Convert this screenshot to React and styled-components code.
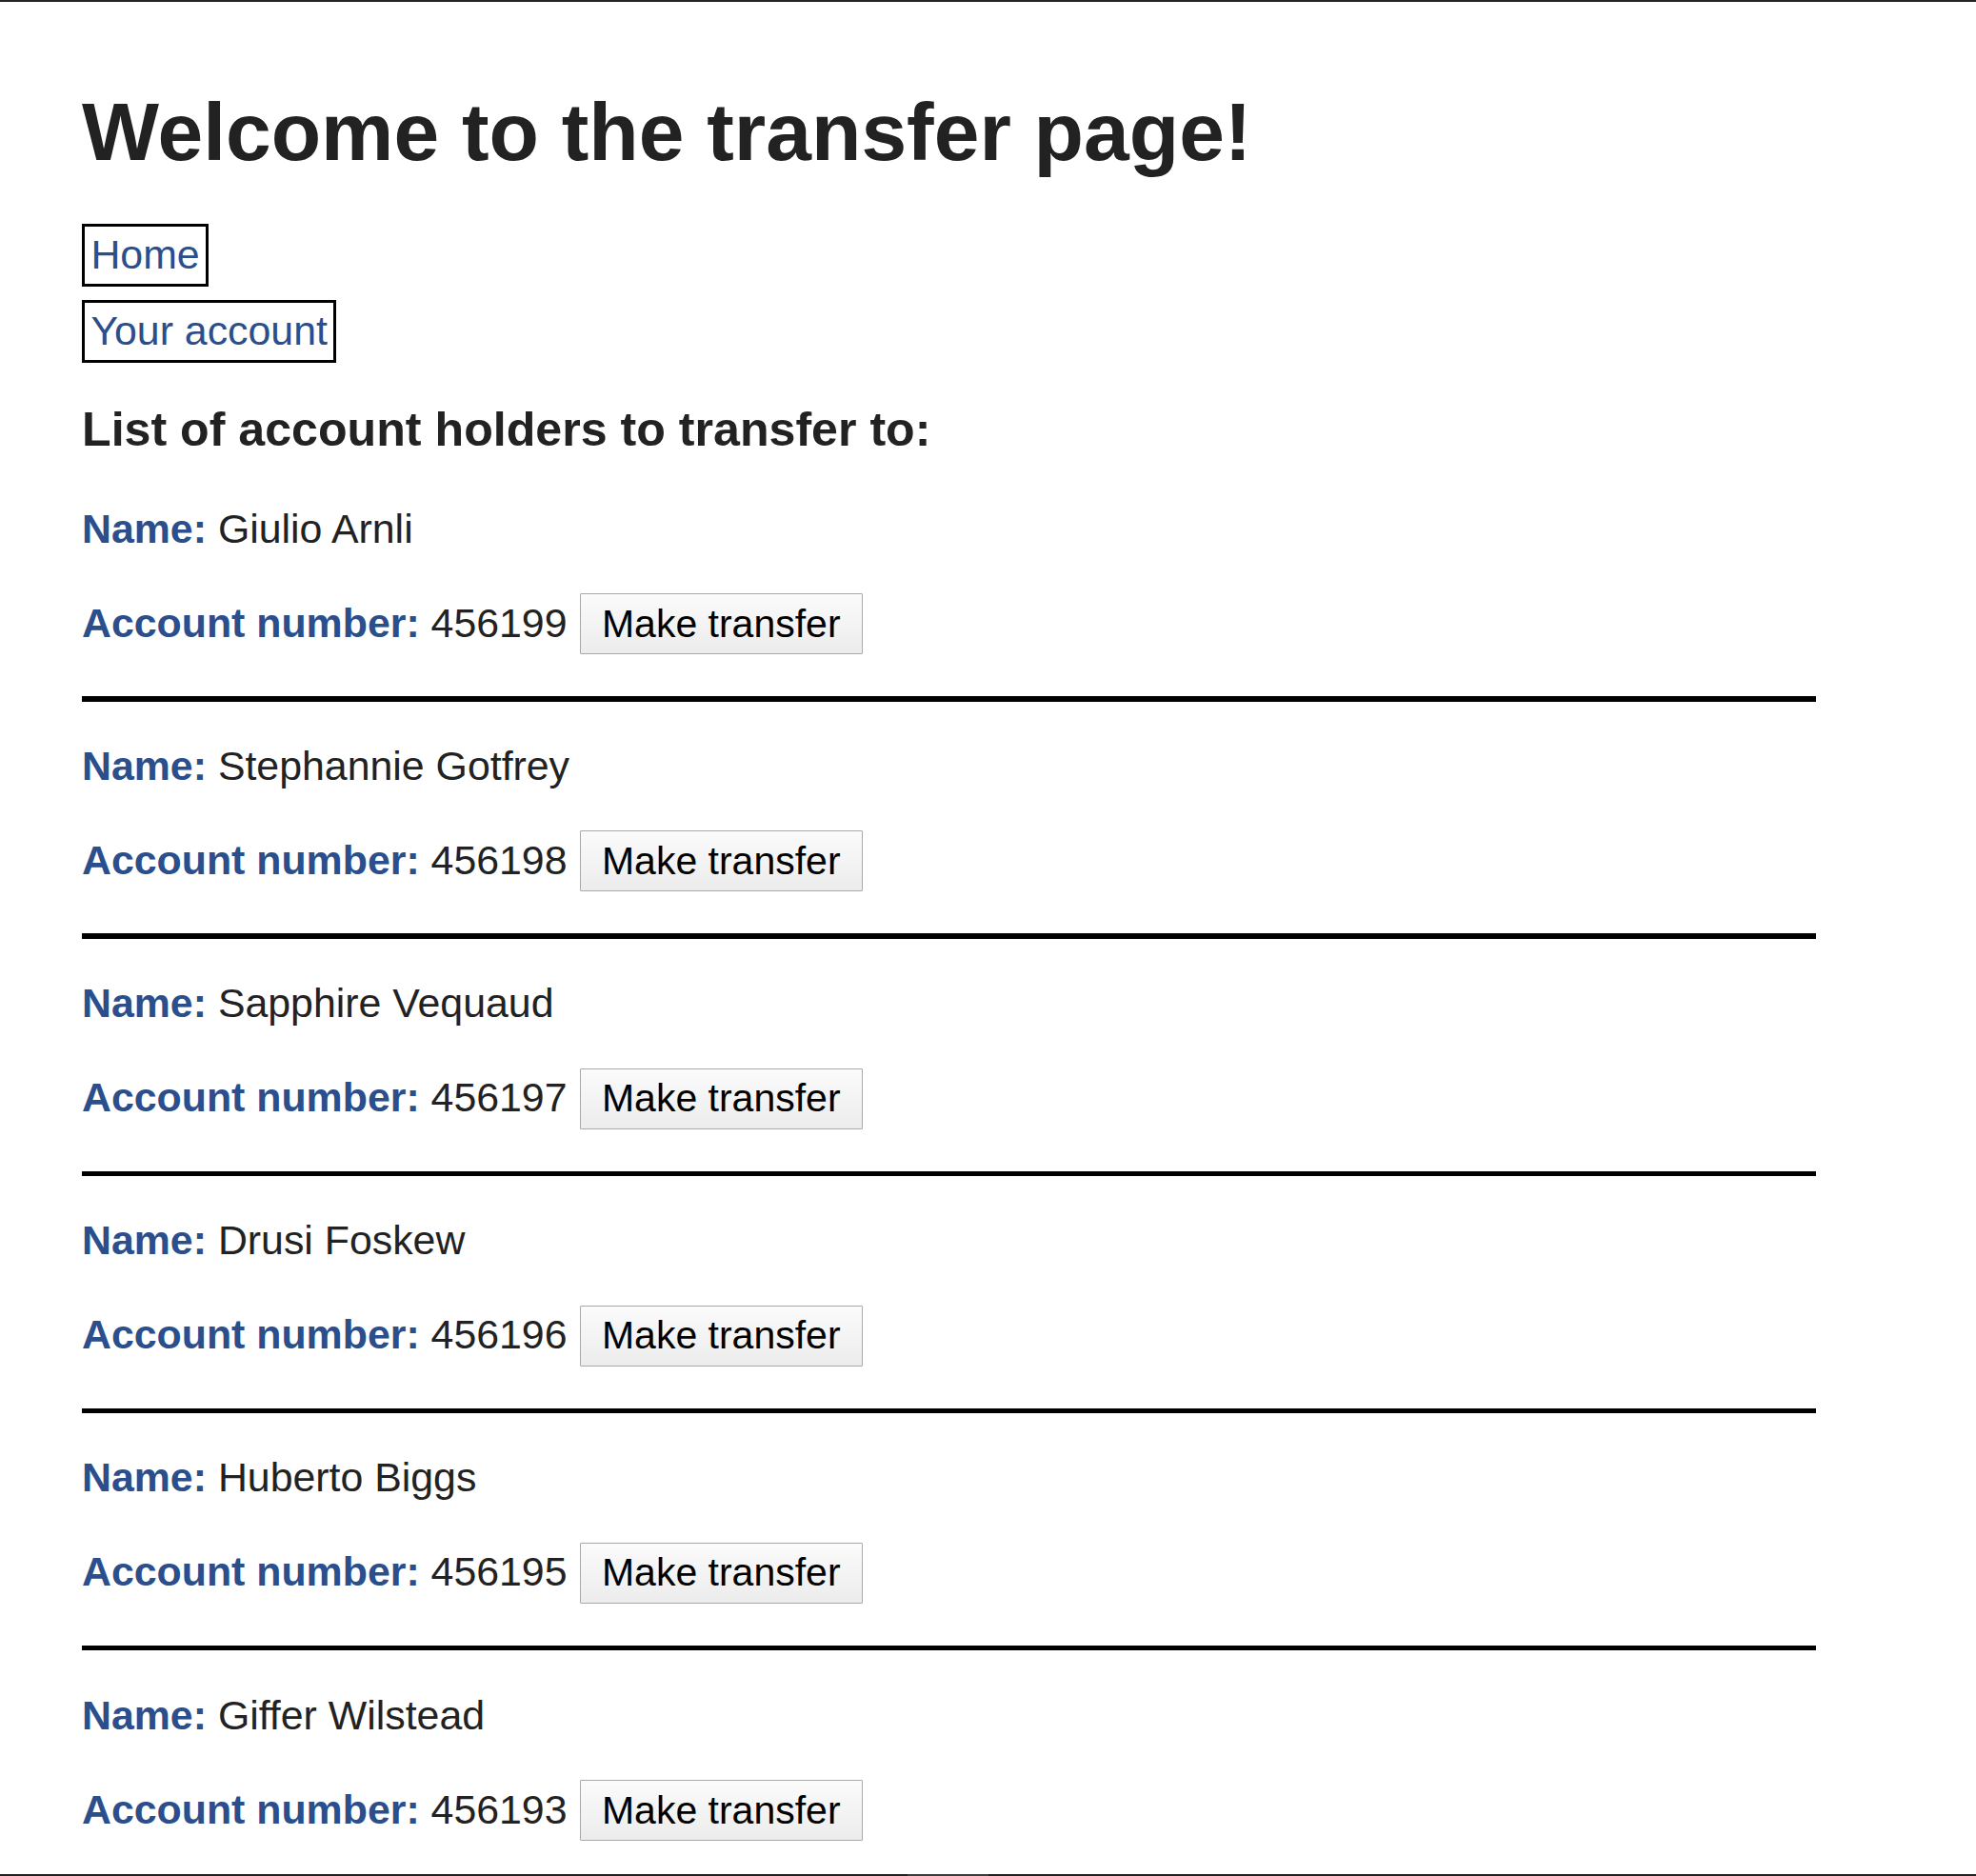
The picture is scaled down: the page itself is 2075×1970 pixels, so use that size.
import React from "react";
import styled, { createGlobalStyle } from "styled-components";

const GlobalStyle = createGlobalStyle`
  html, body {
    margin: 0;
    padding: 0;
    background: #ffffff;
  }
  body {
    font-family: "Liberation Sans", Arial, sans-serif;
    color: #222222;
  }
`;

const Page = styled.div`
  display: flex;
  flex-direction: column;
  height: 1970px;
  box-sizing: border-box;
  border-top: 2px solid #262626;
  overflow: hidden;
`;

const Content = styled.main`
  display: flex;
  flex-direction: column;
  align-items: flex-start;
  padding-left: 86px;
`;

const Title = styled.h1`
  margin: 86.9px 0 0;
  font-size: 85.8px;
  line-height: 98px;
  font-weight: 700;
  color: #222222;
`;

const Nav = styled.nav`
  display: flex;
  flex-direction: column;
  align-items: flex-start;
  gap: 14.3px;
  margin-top: 48.1px;
`;

const NavLink = styled.a`
  display: block;
  font-size: 42.85px;
  line-height: 49px;
  padding: 5.33px 6.4px;
  border: 3px solid #000000;
  color: #2b4e8c;
  text-decoration: none;
`;

const SectionTitle = styled.h3`
  margin: 42.8px 0 0;
  font-size: 50.15px;
  line-height: 57px;
  font-weight: 700;
  color: #222222;
`;

const List = styled.section`
  display: flex;
  flex-direction: column;
  width: 1821px;
  margin-top: 50.2px;
`;

const Line = styled.div`
  font-size: 42.85px;
  line-height: 49px;
  color: #222222;
  white-space: nowrap;
`;

const Label = styled.span`
  font-weight: 700;
  color: #2b4e8c;
`;

const AccountRow = styled.div`
  display: flex;
  align-items: baseline;
  gap: 13px;
  margin-top: 43.5px;
  font-size: 42.85px;
  line-height: 49px;
  color: #222222;
  white-space: nowrap;
`;

const TransferButton = styled.button`
  font-family: "Liberation Sans", Arial, sans-serif;
  font-size: 41px;
  line-height: 47px;
  padding: 7.5px 22.4px;
  border: 1px solid #a9a9a9;
  border-radius: 1px;
  background: linear-gradient(#fbfbfb, #ececec);
  color: #000000;
  cursor: pointer;
`;

const Divider = styled.div`
  height: 5.33px;
  background: #000000;
  margin: 44.1px 0 43.3px;
`;

const BottomEdge = styled.div`
  margin-top: auto;
  height: 2px;
  flex-shrink: 0;
  background: linear-gradient(
    to right,
    #222222 953px,
    #3c3c3c 953px,
    #3c3c3c 1038px,
    #222222 1038px
  );
`;

const holders = [
  { name: "Giulio Arnli", account: "456199" },
  { name: "Stephannie Gotfrey", account: "456198" },
  { name: "Sapphire Vequaud", account: "456197" },
  { name: "Drusi Foskew", account: "456196" },
  { name: "Huberto Biggs", account: "456195" },
  { name: "Giffer Wilstead", account: "456193" },
];

export default function App() {
  return (
    <>
      <GlobalStyle />
      <Page>
        <Content>
          <Title>Welcome to the transfer page!</Title>
          <Nav>
            <NavLink href="#">Home</NavLink>
            <NavLink href="#">Your account</NavLink>
          </Nav>
          <SectionTitle>List of account holders to transfer to:</SectionTitle>
          <List>
            {holders.map((h, i) => (
              <React.Fragment key={h.account}>
                {i > 0 && <Divider />}
                <Line>
                  <Label>Name:</Label> {h.name}
                </Line>
                <AccountRow>
                  <span>
                    <Label>Account number:</Label> {h.account}
                  </span>
                  <TransferButton type="button">Make transfer</TransferButton>
                </AccountRow>
              </React.Fragment>
            ))}
          </List>
        </Content>
        <BottomEdge />
      </Page>
    </>
  );
}
